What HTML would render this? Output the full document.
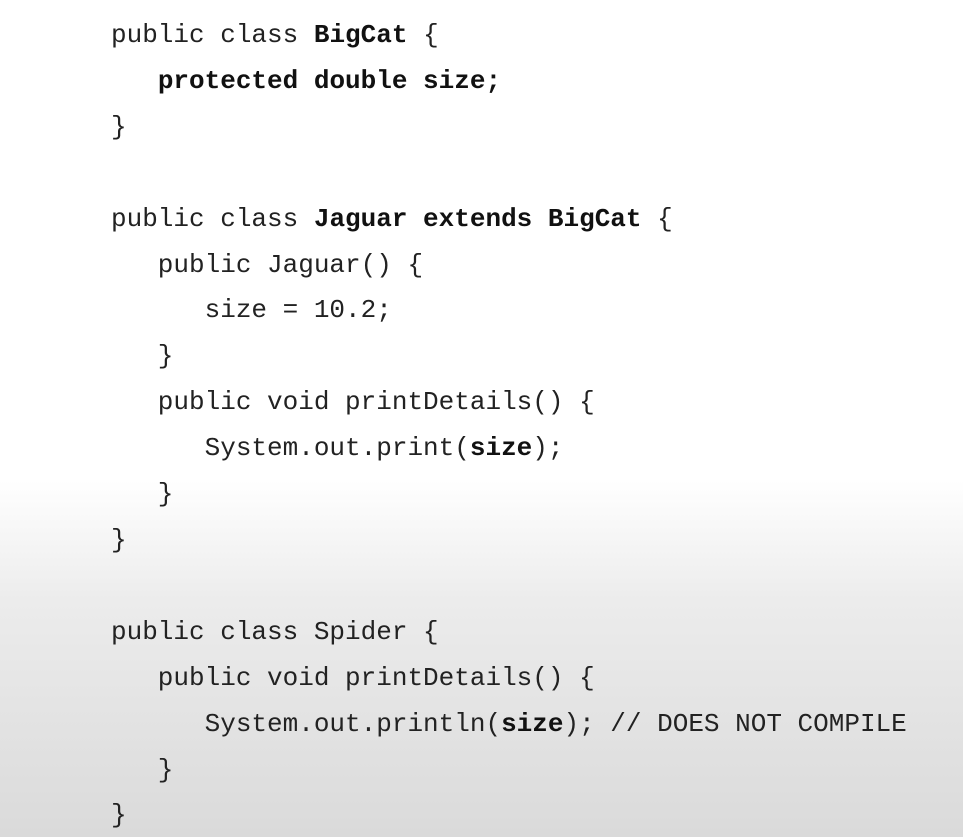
<!DOCTYPE html>
<html><head><style>
html,body{margin:0;padding:0}
body{width:963px;height:837px;overflow:hidden;background:linear-gradient(to bottom,#fff 0px,#fff 480px,#ececec 600px,#dadada 837px);}
pre{position:absolute;left:111px;top:13px;margin:0;font-family:"Liberation Mono",monospace;font-size:26px;line-height:45.9px;color:#222;}
b{font-weight:bold;color:#111}
</style></head><body>
<pre>public class <b>BigCat</b> {
   <b>protected double size;</b>
}

public class <b>Jaguar extends BigCat</b> {
   public Jaguar() {
      size = 10.2;
   }
   public void printDetails() {
      System.out.print(<b>size</b>);
   }
}

public class Spider {
   public void printDetails() {
      System.out.println(<b>size</b>); // DOES NOT COMPILE
   }
}</pre>
</body></html>
